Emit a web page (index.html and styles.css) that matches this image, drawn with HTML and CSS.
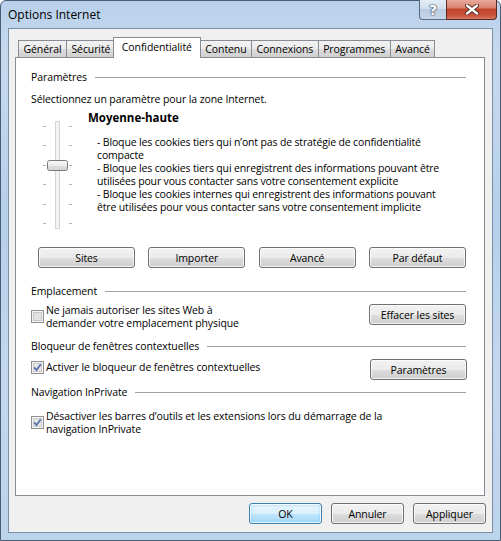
FILE: index.html
```html
<!DOCTYPE html>
<html lang="fr">
<head>
    <meta charset="UTF-8">
    <title>Options Internet</title>
    <link rel="stylesheet" href="styles.css">
</head>
<body>
    <div class="window">
        <div class="titlebar">
            <span class="title">Options Internet</span>
            <div class="caption-buttons">
                <div class="cap-btn help">?</div>
                <div class="cap-btn close">
                    <svg width="14" height="11" viewBox="0 0 14 11">
                        <path d="M2 1.5 L12 9.5 M12 1.5 L2 9.5" stroke="#4a2a22" stroke-width="4.2" stroke-linecap="round"/>
                        <path d="M2 1.5 L12 9.5 M12 1.5 L2 9.5" stroke="#fff" stroke-width="2.4" stroke-linecap="round"/>
                    </svg>
                </div>
            </div>
        </div>

        <div class="client">
            <div class="tabs">
                <div class="tab">Général</div>
                <div class="tab">Sécurité</div>
                <div class="tab active">Confidentialité</div>
                <div class="tab">Contenu</div>
                <div class="tab">Connexions</div>
                <div class="tab">Programmes</div>
                <div class="tab">Avancé</div>
            </div>

            <div class="panel">
                <div class="group-title first"><span>Paramètres</span><div class="rule"></div></div>
                <p class="hint">Sélectionnez un paramètre pour la zone Internet.</p>

                <div class="level">
                    <svg class="slider" width="40" height="112" viewBox="0 0 40 112">
                        <defs>
                            <linearGradient id="thumb" x1="0" y1="0" x2="0" y2="1">
                                <stop offset="0" stop-color="#fafafa"/>
                                <stop offset="0.5" stop-color="#ececec"/>
                                <stop offset="0.55" stop-color="#dedede"/>
                                <stop offset="1" stop-color="#d2d2d2"/>
                            </linearGradient>
                        </defs>
                        <rect x="18.5" y="3.5" width="4" height="107" fill="#f4f4f4" stroke="#d4d4d4"/>
                        <g stroke="#b4b4b4" stroke-width="1">
                            <path d="M6 8.5h3M32 8.5h3"/>
                            <path d="M6 27.5h3M32 27.5h3"/>
                            <path d="M6 47.5h3M32 47.5h3"/>
                            <path d="M6 66.5h3M32 66.5h3"/>
                            <path d="M6 86.5h3M32 86.5h3"/>
                            <path d="M6 105.5h3M32 105.5h3"/>
                        </g>
                        <rect x="10.5" y="42.5" width="20" height="10" rx="2" fill="url(#thumb)" stroke="#7a7a7a"/>
                    </svg>
                    <div class="level-text">
                        <div class="level-name">Moyenne-haute</div>
                        <div class="level-desc">
                            - Bloque les cookies tiers qui n’ont pas de stratégie de confidentialité<br>
                            compacte<br>
                            - Bloque les cookies tiers qui enregistrent des informations pouvant être<br>
                            utilisées pour vous contacter sans votre consentement explicite<br>
                            - Bloque les cookies internes qui enregistrent des informations pouvant<br>
                            être utilisées pour vous contacter sans votre consentement implicite
                        </div>
                    </div>
                </div>

                <div class="button-row">
                    <button class="btn wide">Sites</button>
                    <button class="btn wide">Importer</button>
                    <button class="btn wide">Avancé</button>
                    <button class="btn wide">Par défaut</button>
                </div>

                <div class="group-title location"><span>Emplacement</span><div class="rule"></div></div>
                <div class="option-row row-location">
                    <label class="check">
                        <svg class="box" width="13" height="13" viewBox="0 0 13 13">
                            <rect x="0.5" y="0.5" width="12" height="12" fill="#f4f4f4" stroke="#8f8f8f"/>
                            <rect x="2.5" y="2.5" width="8" height="8" fill="#e2e2e2" stroke="#c6c6c6"/>
                        </svg>
                        <span>Ne jamais autoriser les sites Web à<br>demander votre emplacement physique</span>
                    </label>
                    <button class="btn wide">Effacer les sites</button>
                </div>

                <div class="group-title popup"><span>Bloqueur de fenêtres contextuelles</span><div class="rule"></div></div>
                <div class="option-row row-popup">
                    <label class="check single">
                        <svg class="box" width="13" height="13" viewBox="0 0 13 13">
                            <rect x="0.5" y="0.5" width="12" height="12" fill="#f4f4f4" stroke="#8f8f8f"/>
                            <rect x="2.5" y="2.5" width="8" height="8" fill="#e6e6e6" stroke="#cccccc"/>
                            <path d="M3.2 6.4 L5.5 9 L9.8 3.2" fill="none" stroke="#5a71ad" stroke-width="1.8"/>
                        </svg>
                        <span>Activer le bloqueur de fenêtres contextuelles</span>
                    </label>
                    <button class="btn wide">Paramètres</button>
                </div>

                <div class="group-title private"><span>Navigation InPrivate</span><div class="rule"></div></div>
                <div class="option-row row-private">
                    <label class="check">
                        <svg class="box" width="13" height="13" viewBox="0 0 13 13">
                            <rect x="0.5" y="0.5" width="12" height="12" fill="#f4f4f4" stroke="#8f8f8f"/>
                            <rect x="2.5" y="2.5" width="8" height="8" fill="#e6e6e6" stroke="#cccccc"/>
                            <path d="M3.2 6.4 L5.5 9 L9.8 3.2" fill="none" stroke="#5a71ad" stroke-width="1.8"/>
                        </svg>
                        <span>Désactiver les barres d’outils et les extensions lors du démarrage de la<br>navigation InPrivate</span>
                    </label>
                </div>
            </div>

            <div class="dialog-buttons">
                <button class="btn default">OK</button>
                <button class="btn">Annuler</button>
                <button class="btn">Appliquer</button>
            </div>
        </div>
    </div>
</body>
</html>
```

FILE: styles.css
```css
body {
    margin: 0;
    padding: 0;
    background: #fff;
    font-family: "Open Sans", "Noto Sans", sans-serif;
    font-size: 10.5px;
    letter-spacing: -0.1px;
    color: #000;
}
.window {
    width: 501px;
    height: 541px;
    box-sizing: border-box;
    padding: 0 7px 7px;
    border: 1px solid #4a5d73;
    border-radius: 6px 6px 0 0;
    background: linear-gradient(180deg, #b8d0ea 0%, #c6daef 10%, #b6cfea 40%, #c3d8ef 70%, #bcd3ec 100%);
    display: flex;
    flex-direction: column;
}
.titlebar {
    height: 27px;
    display: flex;
    justify-content: space-between;
    align-items: flex-start;
}
.title {
    padding-top: 7px;
    font-size: 12px;
    letter-spacing: 0;
    line-height: 14px;
    color: #000;
}
.caption-buttons {
    display: flex;
    margin-right: -4px;
    margin-top: -1px;
}
.cap-btn {
    height: 19px;
    border: 1px solid #5a6a80;
    border-top: none;
    display: flex;
    align-items: center;
    justify-content: center;
    box-sizing: content-box;
}
.cap-btn.help {
    width: 26px;
    border-right: none;
    border-radius: 0 0 0 4px;
    background: linear-gradient(180deg, #e4edf7 0%, #d2dfee 45%, #b9cbe0 50%, #c7d7ea 100%);
    color: #fff;
    font-weight: bold;
    font-size: 14px;
    font-family: "DejaVu Sans", sans-serif;
    text-shadow: 0 0 1px #3b4a5e, 0 0 1px #3b4a5e, 0 0 2px #3b4a5e;
}
.cap-btn.close {
    width: 49px;
    border-radius: 0 0 4px 0;
    border-color: #5a2b25;
    background: linear-gradient(180deg, #e9a99c 0%, #d9826f 40%, #c4432d 50%, #c9533c 80%, #d7785f 100%);
}
.client {
    flex: 1;
    background: #f0f0f0;
    border: 1px solid #7a8ea6;
    display: flex;
    flex-direction: column;
}
.tabs {
    display: flex;
    align-items: flex-end;
    height: 20px;
    margin-top: 8px;
    padding-left: 9px;
    position: relative;
    z-index: 1;
}
.tab {
    height: 16px;
    line-height: 16px;
    padding: 0 4.5px;
    border: 1px solid #898c95;
    border-bottom: none;
    margin-right: -1px;
    background: linear-gradient(180deg, #f2f2f2 0%, #ebebeb 50%, #dddddd 51%, #cfcfcf 100%);
}
.tab.active {
    height: 20px;
    line-height: 18px;
    margin: 0 -1px -1px -2px;
    padding: 0 8px;
    background: #fff;
    position: relative;
    z-index: 2;
}
.tab.active + .tab {
    margin-left: 0;
}
.panel {
    height: 437px;
    margin: 0 7px 0 6px;
    border: 1px solid #898c95;
    background: #fff;
    padding: 0 18px 0 15px;
}
.group-title {
    display: flex;
    align-items: center;
    height: 14px;
    line-height: 14px;
}
.group-title span {
    margin-right: 8px;
}
.group-title .rule {
    flex: 1;
    height: 1px;
    background: #a0a0a0;
}
.group-title.first {
    margin-top: 12px;
}
.hint {
    margin: 8px 0 0;
    line-height: 14px;
}
.level {
    display: flex;
    margin-top: 5px;
}
.slider {
    margin: 7px 0 0 6px;
    display: block;
}
.level-text {
    margin-left: 11px;
}
.level-name {
    font-weight: bold;
    font-size: 11.5px;
    letter-spacing: 0;
    line-height: 14px;
}
.level-desc {
    margin-top: 11px;
    padding-left: 9px;
    line-height: 13px;
    letter-spacing: -0.15px;
    white-space: nowrap;
}
.button-row {
    display: flex;
    justify-content: space-between;
    margin-top: 17px;
    padding-left: 7px;
}
.btn {
    font-family: inherit;
    font-size: 10.5px;
    letter-spacing: -0.1px;
    color: #000;
    height: 21px;
    width: 73px;
    padding: 0;
    border: 1px solid #707070;
    border-radius: 3px;
    background: linear-gradient(180deg, #f2f2f2 0%, #ebebeb 50%, #dddddd 51%, #cfcfcf 100%);
    box-shadow: inset 0 0 0 1px rgba(255, 255, 255, 0.75);
}
.btn.wide {
    width: 97px;
}
.btn.default {
    border-color: #3c7fb1;
    background: linear-gradient(180deg, #eaf6fd 0%, #d9f0fc 50%, #bee6fd 51%, #a7d9f5 100%);
    box-shadow: inset 0 0 0 1px rgba(255, 255, 255, 0.8), inset 0 0 2px 2px rgba(120, 200, 240, 0.35);
}
.group-title.location {
    margin-top: 16px;
}
.option-row {
    display: flex;
    justify-content: space-between;
    align-items: flex-start;
}
.row-location {
    margin-top: 6px;
    height: 26px;
}
.check {
    display: flex;
    align-items: flex-start;
    line-height: 13px;
    padding-top: 0;
}
.check .box {
    flex: none;
    margin: 6px 2px 0 0;
}
.check.single {
    align-items: center;
    line-height: 14px;
    padding-top: 1px;
}
.check.single .box {
    margin-top: 0;
}
.group-title.popup {
    margin-top: 9px;
}
.row-popup {
    margin-top: 6px;
    height: 21px;
}
.row-popup .btn {
    margin-right: -1px;
}
.group-title.private {
    margin-top: 5px;
}
.row-private {
    margin-top: 11px;
}
.dialog-buttons {
    display: flex;
    justify-content: flex-end;
    gap: 9px;
    margin-top: 7px;
    padding-right: 6px;
}
```
